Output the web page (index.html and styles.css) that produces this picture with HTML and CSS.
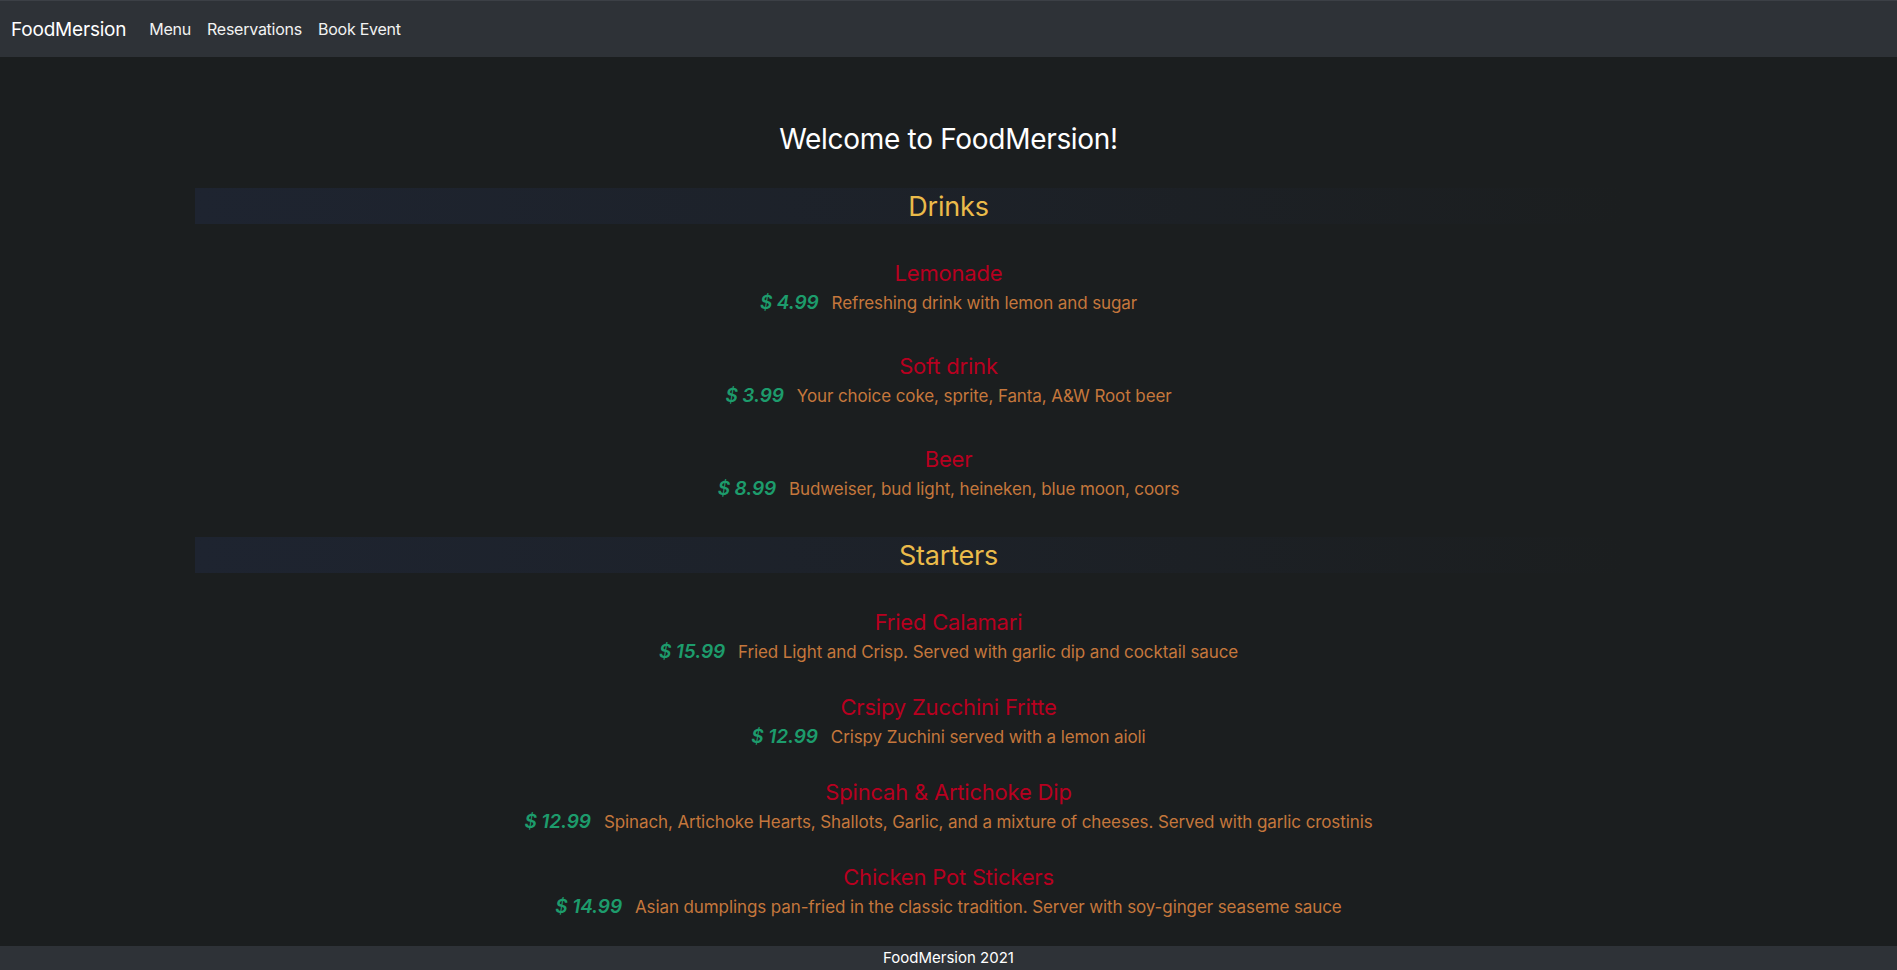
FILE: index.html
```html
<!DOCTYPE html>
<html lang="en">
<head>
<meta charset="utf-8">
<title>FoodMersion</title>
<link rel="stylesheet" href="styles.css">
</head>
<body>
<nav class="navbar">
  <a class="brand" href="#">FoodMersion</a>
  <ul class="nav-links">
    <li><a href="#">Menu</a></li>
    <li><a href="#">Reservations</a></li>
    <li><a href="#">Book Event</a></li>
  </ul>
</nav>
<main class="content">
  <h2 class="welcome">Welcome to FoodMersion!</h2>

  <section class="menu-section drinks">
    <h3 class="section-title">Drinks</h3>
    <div class="item">
      <h4 class="item-name">Lemonade</h4>
      <p class="item-line"><span class="price">$ 4.99</span><span class="desc">Refreshing drink with lemon and sugar</span></p>
    </div>
    <div class="item">
      <h4 class="item-name">Soft drink</h4>
      <p class="item-line"><span class="price">$ 3.99</span><span class="desc">Your choice coke, sprite, Fanta, A&amp;W Root beer</span></p>
    </div>
    <div class="item">
      <h4 class="item-name">Beer</h4>
      <p class="item-line"><span class="price">$ 8.99</span><span class="desc">Budweiser, bud light, heineken, blue moon, coors</span></p>
    </div>
  </section>

  <section class="menu-section starters">
    <h3 class="section-title">Starters</h3>
    <div class="item">
      <h4 class="item-name">Fried Calamari</h4>
      <p class="item-line"><span class="price">$ 15.99</span><span class="desc">Fried Light and Crisp. Served with garlic dip and cocktail sauce</span></p>
    </div>
    <div class="item">
      <h4 class="item-name">Crsipy Zucchini Fritte</h4>
      <p class="item-line"><span class="price">$ 12.99</span><span class="desc">Crispy Zuchini served with a lemon aioli</span></p>
    </div>
    <div class="item">
      <h4 class="item-name">Spincah &amp; Artichoke Dip</h4>
      <p class="item-line"><span class="price">$ 12.99</span><span class="desc">Spinach, Artichoke Hearts, Shallots, Garlic, and a mixture of cheeses. Served with garlic crostinis</span></p>
    </div>
    <div class="item">
      <h4 class="item-name">Chicken Pot Stickers</h4>
      <p class="item-line"><span class="price">$ 14.99</span><span class="desc">Asian dumplings pan-fried in the classic tradition. Server with soy-ginger seaseme sauce</span></p>
    </div>
  </section>
</main>
<footer class="footer">FoodMersion 2021</footer>
</body>
</html>
```

FILE: styles.css
```css
* { box-sizing: border-box; }

html, body {
  margin: 0;
  padding: 0;
  height: 100%;
}

body {
  background: #1b1e1f;
  color: #e8e6e3;
  font-family: Inter, "Noto Sans", "Liberation Sans", sans-serif;
  font-size: 16px;
  overflow: hidden;
}

.navbar {
  display: flex;
  align-items: center;
  height: 57px;
  padding: 0 11px;
  background: #2e3237;
  border-top: 1px solid #3c4046;
}

.brand {
  color: #ffffff;
  text-decoration: none;
  font-size: 19px;
  margin-right: 15px;
  letter-spacing: -0.2px;
}

.nav-links {
  display: flex;
  list-style: none;
  margin: 0;
  padding: 0;
}

.nav-links a {
  display: block;
  color: #f2f2f2;
  text-decoration: none;
  font-size: 16px;
  padding: 8px;
  letter-spacing: -0.25px;
}

.content {
  padding-top: 63px;
}

.welcome {
  margin: 0 0 30px;
  text-align: center;
  color: #ffffff;
  font-weight: 400;
  font-size: 28px;
  line-height: 38px;
  letter-spacing: -0.3px;
}

.menu-section {
  margin: 0 195px;
}

.section-title {
  margin: 0 0 34px;
  height: 36px;
  line-height: 37px;
  text-align: center;
  color: #ebbb4a;
  font-weight: 400;
  font-size: 27px;
  letter-spacing: -0.2px;
  background: linear-gradient(90deg, #1e2430 0%, rgba(30, 36, 48, 0.6) 45%, rgba(30, 36, 48, 0) 95%);
}

.item {
  text-align: center;
}

.drinks .item {
  padding-bottom: 33px;
}

.starters .item {
  padding-bottom: 25px;
}

.item-name {
  margin: 0;
  font-weight: 400;
  font-size: 22px;
  line-height: 30px;
  color: #b8001f;
  letter-spacing: -0.2px;
}

.item-line {
  margin: 0;
  font-size: 17px;
  line-height: 30px;
  letter-spacing: -0.1px;
}

.price {
  color: #1d9c6c;
  font-style: italic;
  font-weight: 600;
  font-size: 19px;
  margin-right: 13px;
}

.desc {
  color: #c5773c;
}

.footer {
  position: fixed;
  left: 0;
  right: 0;
  bottom: 0;
  height: 24px;
  line-height: 24px;
  background: #2e3237;
  color: #ffffff;
  text-align: center;
  font-size: 15px;
}
```
